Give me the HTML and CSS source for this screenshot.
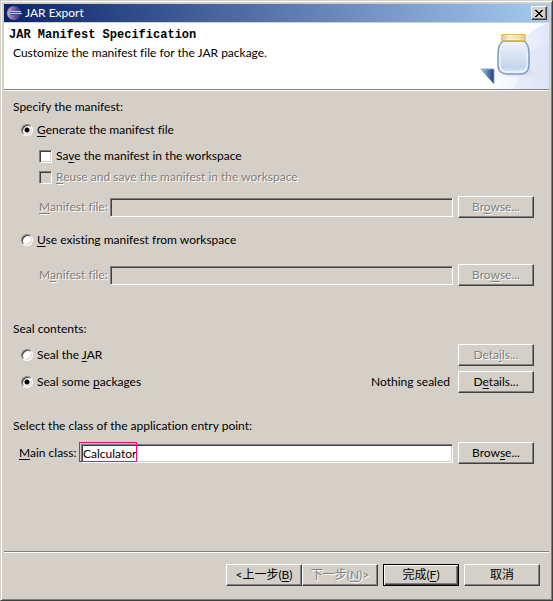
FILE: index.html
```html
<!DOCTYPE html>
<html lang="en">
<head>
  <meta charset="UTF-8">
  <title>JAR Export</title>
  <link rel="stylesheet" href="styles.css">
</head>
<body>
  <form class="window" onsubmit="return false">
    <div class="titlebar">
      <svg class="app-icon" width="16" height="16" viewBox="0 0 16 16" aria-hidden="true">
        <defs>
          <linearGradient id="globe" x1="0" y1="0" x2="1" y2="0">
            <stop offset="0" stop-color="#d4a8b8"/>
            <stop offset=".4" stop-color="#7d70a8"/>
            <stop offset="1" stop-color="#2c2870"/>
          </linearGradient>
        </defs>
        <circle cx="7" cy="8" r="7" fill="url(#globe)"/>
        <path d="M3 6h11v1H3zM2 8h13v1H2z" fill="#b8c8ec"/>
        <path d="M3 7h11v1H3zM3 9h11v1H3z" fill="#3c4c94"/>
      </svg>
      <span class="window-title">JAR Export</span>
      <button type="button" class="close" aria-label="Close">
        <svg width="8" height="7" viewBox="0 0 8 7" shape-rendering="crispEdges">
          <path d="M0 0h2v1h1v1h2V1h1V0h2v1H7v1H6v1H5v1h1v1h1v1h1v1H6V6H5V5H3v1H2v1H0V6h1V5h1V4h1V3H2V2H1V1H0z"/>
        </svg>
      </button>
    </div>

    <div class="banner">
      <div class="banner-text">
        <h1>JAR Manifest Specification</h1>
        <p>Customize the manifest file for the JAR package.</p>
      </div>
      <svg class="jar" width="75" height="66" viewBox="0 0 75 66" aria-hidden="true">
        <defs>
          <linearGradient id="haze" x1="0" y1="0" x2="1" y2="0">
            <stop offset=".2" stop-color="#ffffff"/>
            <stop offset="1" stop-color="#e0e7f8"/>
          </linearGradient>
          <linearGradient id="glass" x1="0" y1="0" x2="0" y2="1">
            <stop offset="0" stop-color="#f4f6ea"/>
            <stop offset=".3" stop-color="#dfe9f5"/>
            <stop offset=".8" stop-color="#c2d6ec"/>
            <stop offset="1" stop-color="#e4eff9"/>
          </linearGradient>
          <linearGradient id="lid" x1="0" y1="0" x2="1" y2="0">
            <stop offset="0" stop-color="#ecc060"/>
            <stop offset=".35" stop-color="#fffbe0"/>
            <stop offset=".7" stop-color="#faeab0"/>
            <stop offset="1" stop-color="#ecc468"/>
          </linearGradient>
          <radialGradient id="shade">
            <stop offset="0" stop-color="#d8c4d0"/>
            <stop offset="1" stop-color="#e8e4f4" stop-opacity="0"/>
          </radialGradient>
          <linearGradient id="corner" x1="0" y1="0" x2="1" y2="0">
            <stop offset="0" stop-color="#b8d0ea"/>
            <stop offset="1" stop-color="#1c3c78"/>
          </linearGradient>
        </defs>
        <path d="M0 66C30 58 40 8 75 0V66z" fill="url(#haze)"/>
        <path d="M50 38C56 27 65 23 75 22V66H40z" fill="#d8e0f6" opacity=".4"/>
        <ellipse cx="44" cy="49" rx="26" ry="7" fill="url(#shade)"/>
        <path d="M29 18C25 21 24 25 24 30V42C24 48 28 51 33 51H46C52 51 55 48 55 42V30C55 25 54 21 50 18z" fill="url(#glass)" stroke="#7d9cc4" stroke-width="1.5"/>
        <path d="M26 30V42C26 47 29 49 33 49H46C50 49 53 47 53 42V30" fill="none" stroke="#f2f8fe" stroke-width="1.2"/>
        <rect x="27" y="11" width="25" height="7" rx="1" fill="url(#lid)"/>
        <path d="M28 11.5h23M28 17.5h23" stroke="#e3b64e" stroke-width="1"/>
        <path d="M28 14.5h23" stroke="#edc66c" stroke-width="1" opacity=".6"/>
        <path d="M6 46H20V61z" fill="url(#corner)"/>
        <path d="M7 46H20V60" fill="none" stroke="#86a8d2" stroke-width="1"/>
      </svg>
    </div>

    <div class="content">
      <div class="group">
        <p class="caption">Specify the manifest:</p>
        <div class="choice">
          <input type="radio" id="generate" name="manifest" checked>
          <label for="generate"><u>G</u>enerate the manifest file</label>
        </div>
        <div class="choice sub first">
          <input type="checkbox" id="save">
          <label for="save">Sa<u>v</u>e the manifest in the workspace</label>
        </div>
        <div class="choice sub">
          <input type="checkbox" id="reuse" disabled>
          <label for="reuse"><u>R</u>euse and save the manifest in the workspace</label>
        </div>
        <div class="field manifest">
          <label for="newFile"><u>M</u>anifest file:</label>
          <input type="text" id="newFile" disabled>
          <button type="button" disabled>Br<u>o</u>wse...</button>
        </div>
        <div class="choice existing">
          <input type="radio" id="existing" name="manifest">
          <label for="existing"><u>U</u>se existing manifest from workspace</label>
        </div>
        <div class="field manifest again">
          <label for="oldFile">M<u>a</u>nifest file:</label>
          <input type="text" id="oldFile" disabled>
          <button type="button" disabled>Bro<u>w</u>se...</button>
        </div>
      </div>

      <div class="group">
        <p class="caption">Seal contents:</p>
        <div class="choice seal">
          <input type="radio" id="sealJar" name="seal">
          <label for="sealJar">Seal the <u>J</u>AR</label>
          <button type="button" disabled>Deta<u>i</u>ls...</button>
        </div>
        <div class="choice seal">
          <input type="radio" id="sealSome" name="seal" checked>
          <label for="sealSome">Seal some <u>p</u>ackages</label>
          <span class="status">Nothing sealed</span>
          <button type="button">D<u>e</u>tails...</button>
        </div>
      </div>

      <div class="group">
        <p class="caption">Select the class of the application entry point:</p>
        <div class="field main-class">
          <label for="mainClass"><u>M</u>ain class:</label>
          <div class="marked">
            <input type="text" id="mainClass" value="Calculator">
            <span class="mark"></span>
          </div>
          <button type="button">Brow<u>s</u>e...</button>
        </div>
      </div>
    </div>

    <div class="footer">
      <div class="pair">
        <button type="button">&lt;上一步(<u>B</u>)</button>
        <button type="button" disabled>下一步(<u>N</u>)&gt;</button>
      </div>
      <button type="submit" class="default">完成(<u>F</u>)</button>
      <button type="button">取消</button>
    </div>
  </form>
</body>
</html>
```
FILE: styles.css
```css
* {
  box-sizing: border-box;
}

body {
  margin: 0;
  background-color: #d4d0c8;
  color: #000;
  font-family: Lato, "Liberation Sans", "Noto Sans CJK SC", sans-serif;
  font-size: 12px;
  font-variant-ligatures: none;
  line-height: 16px;
}

h1, p {
  margin: 0;
}

u {
  text-underline-offset: 2px;
}

button, input {
  font: inherit;
  color: inherit;
  margin: 0;
}

/* Window frame */
.window {
  display: flex;
  flex-direction: column;
  min-height: 100vh;
  padding: 2px;
  border: 1px solid;
  border-color: #d4d0c8 #404040 #404040 #d4d0c8;
  box-shadow: inset 1px 1px #fff, inset -1px -1px #808080;
}

.titlebar {
  display: flex;
  align-items: center;
  height: 18px;
  margin: 1px 1px 0;
  padding: 0 2px 0 3px;
  background: linear-gradient(to right, #0a246a, #a6caf0);
  color: #fff;
}

.window-title {
  flex: 1;
  margin-left: 2px;
}

.close {
  display: flex;
  align-items: center;
  justify-content: center;
  width: 16px;
  height: 14px;
  padding: 0;
}

/* Banner */
.banner {
  display: flex;
  justify-content: space-between;
  margin: 1px 1px 0;
  background-color: #fff;
  border-bottom: 1px solid #808080;
  box-shadow: 0 1px #fff;
}

.banner-text {
  padding: 4px 0 0 5px;
}

.banner h1 {
  font-family: "Liberation Mono", monospace;
  font-size: 12px;
  font-weight: bold;
}

.banner p {
  margin: 2px 0 0 4px;
}

.jar {
  flex: none;
}

/* Controls */
button {
  width: 76px;
  height: 22px;
  padding: 0;
  background-color: #d4d0c8;
  border: 1px solid;
  border-color: #fff #404040 #404040 #fff;
  border-radius: 0;
  box-shadow: inset -1px -1px #808080;
  line-height: 16px;
}

button.default {
  border-color: #000;
  box-shadow: inset 1px 1px #fff, inset -1px -1px #404040, inset -2px -2px #808080;
}

button:disabled,
:disabled + label,
.field.manifest label {
  color: #808080;
  text-shadow: 1px 1px #fff;
}

input[type="text"] {
  width: 100%;
  height: 19px;
  padding: 0 1px;
  background-color: #fff;
  border: 1px solid;
  border-color: #808080 #fff #fff #808080;
  border-radius: 0;
  box-shadow: inset 1px 1px #404040, inset -1px -1px #d4d0c8;
  outline: none;
}

input[type="text"]:disabled {
  background-color: #d4d0c8;
  box-shadow: inset 1px 1px #404040;
}

input[type="radio"],
input[type="checkbox"] {
  appearance: none;
  flex: none;
  width: 12px;
  height: 12px;
  background-color: #fff;
  border: 1px solid;
  border-color: #808080 #fff #fff #808080;
  box-shadow: inset 1px 1px #404040, inset -1px -1px #d4d0c8;
}

input[type="radio"] {
  border-radius: 50%;
}

input[type="radio"]:checked {
  background-image: radial-gradient(circle, #000 2px, transparent 3px);
}

input[type="checkbox"] {
  width: 13px;
  height: 13px;
}

input[type="checkbox"]:disabled {
  background-color: #d4d0c8;
}

/* Form */
.content {
  flex: 1;
  display: flex;
  flex-direction: column;
  gap: 33px;
  padding: 7px 16px 0 10px;
}

.group:last-child {
  margin-top: -10px;
}

.caption {
  height: 20px;
  line-height: 20px;
}

.choice {
  display: flex;
  align-items: center;
  min-height: 20px;
  margin-top: 3px;
  padding-left: 8px;
}

.choice label {
  margin-left: 4px;
}

.choice.sub {
  margin-top: 1px;
  padding-left: 26px;
}

.choice.sub.first {
  margin-top: 6px;
}

.choice.existing {
  margin-top: 12px;
}

.choice.seal {
  margin-top: 5px;
}

.choice button {
  margin-left: auto;
}

.status {
  margin-left: auto;
}

.status + button {
  margin-left: 8px;
}

.field {
  display: flex;
  align-items: center;
  gap: 5px;
}

.field button,
.field label {
  flex: none;
  white-space: nowrap;
}

.field.manifest {
  margin-top: 9px;
  padding-left: 26px;
}

.field.manifest label {
  width: 66px;
}

.field.manifest.again {
  margin-top: 14px;
}

.field.main-class {
  margin-top: 6px;
  padding-left: 6px;
}

.field.main-class label {
  width: 57px;
}

.marked {
  position: relative;
  flex: 1;
}

.marked input {
  display: block;
}

.mark {
  position: absolute;
  top: -2px;
  left: -2px;
  width: 58px;
  height: 20px;
  border: 1px solid #ff0084;
  pointer-events: none;
}

/* Footer */
.footer {
  display: flex;
  justify-content: flex-end;
  gap: 5px;
  margin: 0 1px;
  padding: 12px 9px 12px;
  border-top: 1px solid #808080;
  box-shadow: inset 0 1px #fff;
}

.pair {
  display: flex;
}
```
